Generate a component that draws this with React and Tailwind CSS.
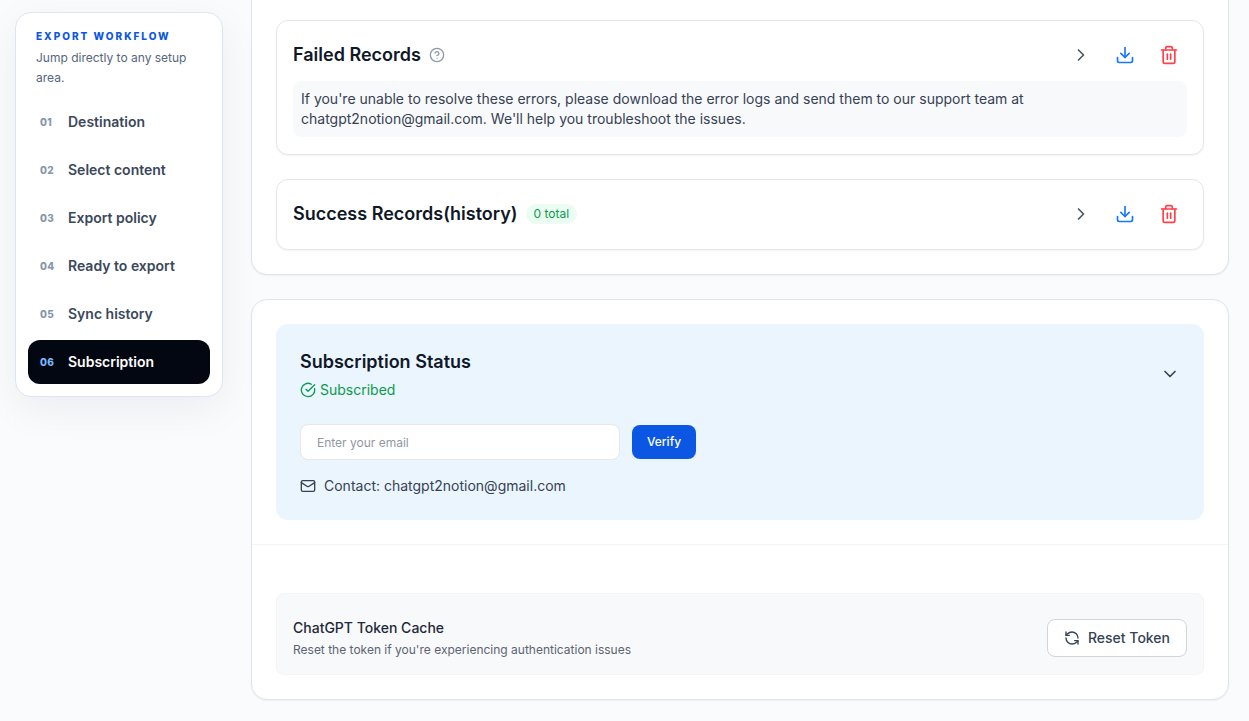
import { useState } from "react";
import {
  ChevronDown,
  ChevronRight,
  CircleCheckBig,
  CircleHelp,
  Download,
  Mail,
  RefreshCcw,
  Trash2,
} from "lucide-react";

const steps = [
  { id: "01", label: "Destination" },
  { id: "02", label: "Select content" },
  { id: "03", label: "Export policy" },
  { id: "04", label: "Ready to export" },
  { id: "05", label: "Sync history" },
  { id: "06", label: "Subscription" },
];

function Sidebar({ active, onSelect }) {
  return (
    <aside className="mt-3 w-52 shrink-0 rounded-2xl border border-[#dde5ee] bg-white p-3 shadow-[0_12px_40px_rgba(15,23,42,0.06)]">
      <div className="px-2 pt-1 pb-3">
        <p className="text-[10px] leading-[15px] font-extrabold tracking-[2px] text-[#0b57e3] uppercase">
          Export workflow
        </p>
        <p className="mt-1 text-xs leading-5 text-[#55657d]">
          Jump directly to any setup area.
        </p>
      </div>
      <nav className="flex flex-col gap-1">
        {steps.map((step) => {
          const isActive = step.id === active;
          return (
            <button
              key={step.id}
              type="button"
              onClick={() => onSelect(step.id)}
              className={`flex h-11 items-center gap-3 rounded-xl px-3 text-left ${
                isActive ? "bg-[#030712] text-white" : "text-[#3a485b]"
              }`}
            >
              <span
                className={`w-4 text-[10px] font-extrabold tracking-wide ${
                  isActive ? "text-[#7cb8ff]" : "text-[#8696ac]"
                }`}
              >
                {step.id}
              </span>
              <span className="text-sm font-semibold">{step.label}</span>
            </button>
          );
        })}
      </nav>
    </aside>
  );
}

function RecordCard({ title, extra, children }) {
  return (
    <div className="rounded-xl border border-gray-200 bg-white px-4 pt-4 pb-[17px] shadow-xs">
      <div className="flex items-center justify-between">
        <div className="flex items-center gap-2">
          <h2 className="text-lg font-semibold text-gray-900">{title}</h2>
          {extra}
        </div>
        <div className="flex gap-2">
          <button type="button" aria-label="Expand" className="grid size-9 place-items-center text-gray-600">
            <ChevronRight size={20} />
          </button>
          <button type="button" aria-label="Download" className="grid size-9 place-items-center text-[#1677ff]">
            <Download size={20} />
          </button>
          <button type="button" aria-label="Delete" className="grid size-9 place-items-center text-[#ff4048]">
            <Trash2 size={20} />
          </button>
        </div>
      </div>
      {children}
    </div>
  );
}

function SubscriptionPanel() {
  const [email, setEmail] = useState("");

  return (
    <div className="rounded-xl bg-[#eaf5fe] p-6">
      <div className="flex items-center justify-between">
        <div>
          <h2 className="text-lg leading-7 font-semibold text-gray-900">Subscription Status</h2>
          <p className="mt-1 flex items-center gap-1 text-sm text-[#0c9a4b]">
            <CircleCheckBig size={16} />
            Subscribed
          </p>
        </div>
        <button type="button" aria-label="Collapse" className="text-gray-700">
          <ChevronDown size={20} />
        </button>
      </div>
      <form className="mt-6 flex items-center gap-3" onSubmit={(e) => e.preventDefault()}>
        <input
          type="email"
          aria-label="Email"
          value={email}
          onChange={(e) => setEmail(e.target.value)}
          placeholder="Enter your email"
          className="h-9 w-80 rounded-lg border border-gray-200 bg-white px-4 text-xs text-gray-700 placeholder:text-[#9197a3]"
        />
        <button type="submit" className="h-[34px] w-16 rounded-lg bg-[#0b57e3] text-xs font-medium text-white">
          Verify
        </button>
      </form>
      <p className="mt-4 flex items-center gap-2 text-sm text-gray-700">
        <Mail size={16} />
        Contact: chatgpt2notion@gmail.com
      </p>
    </div>
  );
}

export default function App() {
  const [active, setActive] = useState("06");

  return (
    <div className="flex min-h-screen items-start gap-7 bg-[#fafbfd] pr-5 pl-[15px] font-[Inter,sans-serif]">
      <Sidebar active={active} onSelect={setActive} />

      <main className="flex min-w-0 flex-1 flex-col gap-6 pb-5">
        {/* Sync history */}
        <section className="flex flex-col gap-6 rounded-b-2xl border border-t-0 border-[#dde5ee] bg-white px-6 pt-5 pb-6 shadow-xs">
          <RecordCard
            title="Failed Records"
            extra={<CircleHelp size={16} className="text-[#9298a8]" />}
          >
            <p className="mt-2 rounded-lg bg-[#f8f9fb] p-2 text-sm text-gray-700">
              If you're unable to resolve these errors, please download the error logs and send them
              to our support team at chatgpt2notion@gmail.com. We'll help you troubleshoot the
              issues.
            </p>
          </RecordCard>
          <RecordCard
            title="Success Records(history)"
            extra={
              <span className="rounded-full bg-[#ebfdf3] px-2 py-0.5 text-xs text-[#0c9a4b]">
                0 total
              </span>
            }
          />
        </section>

        {/* Subscription */}
        <section className="rounded-2xl border border-[#dde5ee] bg-white shadow-xs">
          <div className="border-b border-gray-100 p-6">
            <SubscriptionPanel />
          </div>
          <div className="px-6 pt-12 pb-6">
            <div className="flex items-center justify-between rounded-lg border border-gray-100 bg-[#f8f9fb] px-4 pt-6 pb-4">
              <div>
                <h3 className="text-sm font-medium text-gray-800">ChatGPT Token Cache</h3>
                <p className="mt-1 text-xs text-[#5b6472]">
                  Reset the token if you're experiencing authentication issues
                </p>
              </div>
              <button
                type="button"
                className="flex items-center gap-2 rounded-lg border border-gray-300 bg-white px-4 py-2 text-sm font-medium text-gray-700"
              >
                <RefreshCcw size={16} />
                Reset Token
              </button>
            </div>
          </div>
        </section>
      </main>
    </div>
  );
}
